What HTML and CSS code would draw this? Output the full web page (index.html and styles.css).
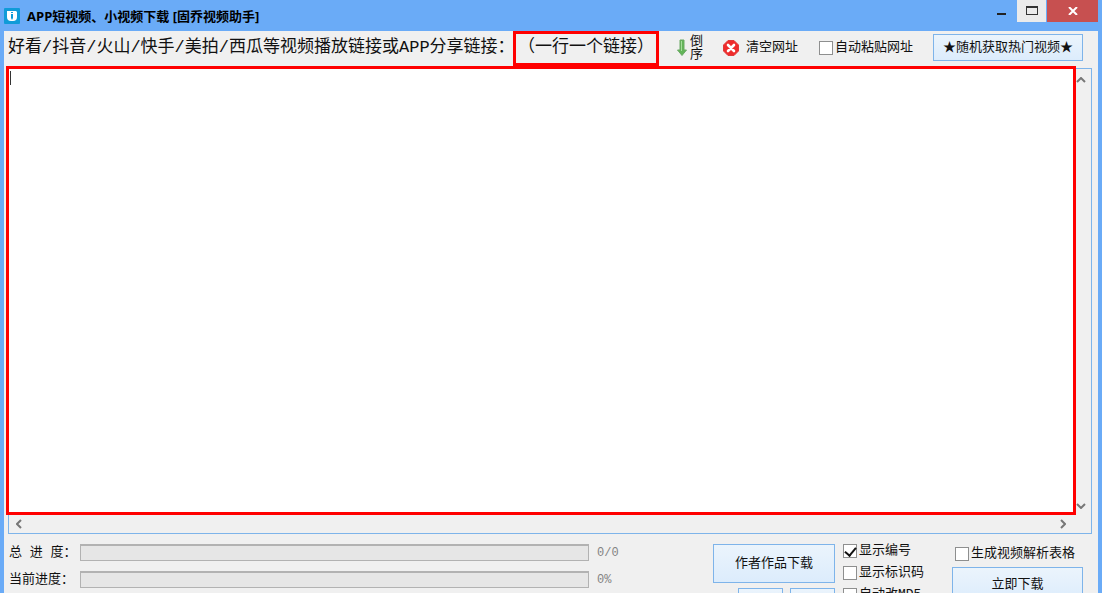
FILE: index.html
```html
<!DOCTYPE html>
<html lang="zh-CN">
<head>
    <meta charset="UTF-8">
    <meta name="viewport" content="width=device-width, initial-scale=1.0">
    <title>APP短视频、小视频下载 [固乔视频助手]</title>
    <link rel="stylesheet" href="styles.css">
</head>
<body>
    <div class="window">
        <!-- Title bar -->
        <header class="titlebar">
            <svg class="logo" viewBox="0 0 16 16">
                <rect width="16" height="16" rx="1" fill="#0f9bd8"/>
                <path d="M3 3h9l1 1v5a4 4 0 0 1-4 4H7a4 4 0 0 1-4-4z" fill="#fff"/>
                <rect x="7" y="4" width="2" height="1" fill="#0f9bd8"/>
                <path d="M7 6h2v4l-1 2-1-2z" fill="#0f9bd8"/>
            </svg>
            <h1 class="title">APP短视频、小视频下载 [固乔视频助手]</h1>
            <div class="window-buttons">
                <button class="win-button minimize" aria-label="最小化">
                    <svg width="10" height="22" viewBox="0 0 10 22"><path d="M0 13h9v2H0z" fill="#222"/></svg>
                </button>
                <button class="win-button maximize" aria-label="最大化">
                    <svg width="12" height="10" viewBox="0 0 12 10"><path d="M0 0h12v9H0zM1 2v6h10V2z" fill="#333" fill-rule="evenodd"/></svg>
                </button>
                <button class="win-button close" aria-label="关闭">
                    <svg width="10" height="8" viewBox="0 0 10 8"><path d="M1 0l8 8M9 0L1 8" stroke="#fff" stroke-width="2"/></svg>
                </button>
            </div>
        </header>

        <main class="content">
            <!-- Toolbar -->
            <div class="toolbar">
                <label class="prompt" for="links">好看/抖音/火山/快手/美拍/西瓜等视频播放链接或APP分享链接：</label>
                <span class="hint">（一行一个链接）</span>
                <button class="tool reverse">
                    <svg width="10" height="17" viewBox="0 0 10 17"><path d="M3 1h4v10h2.5L5 16.500.5 11H3z" fill="#62b558" stroke="#6aa964"/><path d="M4.500 2v10" stroke="#a5dc9b"/></svg>
                    <span>倒<br>序</span>
                </button>
                <button class="tool clear">
                    <svg width="16" height="16" viewBox="0 0 16 16"><path d="M5 .5h6L15.500 5v6L11 15.500H5L.5 11V5z" fill="#ee2c2c" stroke="#e03a3a"/><path d="M5 5l6 6M11 5l-6 6" stroke="#fff" stroke-width="2.600" stroke-linecap="round"/></svg>
                    <span>清空网址</span>
                </button>
                <label class="check"><input type="checkbox">自动粘贴网址</label>
                <button class="button random">★随机获取热门视频★</button>
            </div>

            <!-- Link editor -->
            <div class="editor">
                <textarea id="links" class="links" wrap="off"></textarea>
                <div class="scroll-y">
                    <svg width="10" height="6" viewBox="0 0 10 6"><path d="M1 5l4-4 4 4" /></svg>
                    <svg width="10" height="6" viewBox="0 0 10 6"><path d="M1 1l4 4 4-4" /></svg>
                </div>
                <div class="scroll-x">
                    <svg width="6" height="10" viewBox="0 0 6 10"><path d="M5 1L1 5l4 4" /></svg>
                    <svg width="6" height="10" viewBox="0 0 6 10"><path d="M1 1l4 4-4 4" /></svg>
                </div>
                <div class="highlight"></div>
                <div class="caret"></div>
            </div>

            <!-- Progress and options -->
            <div class="footer">
                <div class="progress-list">
                    <span class="progress-label">总&nbsp;进&nbsp;度：</span>
                    <div class="progress" role="progressbar" aria-label="总进度" aria-valuenow="0"></div>
                    <span class="progress-value">0/0</span>
                    <span class="progress-label">当前进度：</span>
                    <div class="progress" role="progressbar" aria-label="当前进度" aria-valuenow="0"></div>
                    <span class="progress-value">0%</span>
                </div>
                <div class="works">
                    <button class="button works-button">作者作品下载</button>
                    <div class="small-buttons">
                        <button class="button" aria-label="上一个"></button>
                        <button class="button" aria-label="下一个"></button>
                    </div>
                </div>
                <div class="options">
                    <label class="check"><input type="checkbox" checked>显示编号</label>
                    <label class="check"><input type="checkbox">显示标识码</label>
                    <label class="check"><input type="checkbox">自动改MD5</label>
                </div>
                <div class="download">
                    <label class="check"><input type="checkbox">生成视频解析表格</label>
                    <button class="button download-button">立即下载</button>
                </div>
            </div>
        </main>
    </div>
</body>
</html>
```
FILE: styles.css
```css
/* General Styles */
* {
    box-sizing: border-box;
}

body {
    margin: 0;
    font-family: "Liberation Mono", "Noto Sans CJK SC", monospace;
    font-size: 13px;
    line-height: 16px;
    color: #111;
}

button {
    font: inherit;
    color: inherit;
    padding: 0;
    border: none;
    background: none;
    white-space: nowrap;
}

svg {
    display: block;
    flex: none;
}

/* Window */
.window {
    display: flex;
    flex-direction: column;
    height: 100vh;
    padding: 0 4px;
    background: #6aabf7;
    overflow: hidden;
}

.titlebar {
    display: flex;
    align-items: center;
    height: 31px;
    flex: none;
}

.logo {
    width: 16px;
    height: 16px;
}

.title {
    margin: 0 0 0 7px;
    font-family: "Open Sans", "Noto Sans CJK SC", sans-serif;
    font-size: 13px;
    font-weight: 700;
    color: #000;
}

.window-buttons {
    display: flex;
    align-self: flex-start;
    margin-left: auto;
}

.win-button {
    display: flex;
    align-items: center;
    justify-content: center;
    height: 22px;
}

.minimize {
    width: 30px;
}

.maximize {
    width: 29px;
    background: #ebebeb;
}

.close {
    width: 51px;
    margin-left: 1px;
    background: #c75050;
}

.content {
    display: flex;
    flex-direction: column;
    flex: 1;
    min-height: 0;
    background: #f0f0f0;
}

/* Toolbar */
.toolbar {
    display: flex;
    align-items: center;
    height: 35px;
    padding: 0 15px 2px 4px;
    flex: none;
    white-space: nowrap;
}

.prompt,
.hint {
    font-size: 17px;
}

.prompt {
    width: 505px;
}

.hint {
    align-self: flex-start;
    height: 35px;
    padding: 0 2px;
    line-height: 28px;
    border: 3px solid #f00;
}

.tool {
    display: flex;
    align-items: center;
}

.reverse {
    margin-left: 18px;
    gap: 3px;
    line-height: 13px;
}

.clear {
    margin-left: 20px;
    gap: 7px;
}

.toolbar .check {
    margin-left: 21px;
}

.button {
    background: linear-gradient(#ebf4fc, #dcecfc);
    border: 1px solid #7eb4ea;
}

.random {
    width: 150px;
    height: 27px;
    margin-left: auto;
}

/* Check boxes */
.check {
    display: flex;
    align-items: center;
    gap: 2px;
    height: 14px;
    white-space: nowrap;
}

.check input {
    appearance: none;
    width: 14px;
    height: 14px;
    margin: 0;
    flex: none;
    background: #fff;
    border: 1px solid #8e8f8f;
}

.check input:checked::before {
    content: "";
    display: block;
    width: 5px;
    height: 9px;
    margin: 0 auto;
    border: solid #111;
    border-width: 0 2px 2px 0;
    transform: rotate(40deg);
}

/* Link editor */
.editor {
    position: relative;
    display: grid;
    grid-template-columns: 1fr 18px;
    grid-template-rows: 1fr 19px;
    flex: 1;
    min-height: 0;
    margin: 2px 6px 0 4px;
    border: 1px solid #7eb4ea;
}

.links {
    width: 100%;
    height: 100%;
    padding: 2px;
    border: none;
    outline: none;
    resize: none;
    overflow: hidden;
    background: #fff;
    font: inherit;
}

.scroll-y,
.scroll-x {
    display: flex;
    align-items: center;
    justify-content: space-between;
}

.scroll-y {
    flex-direction: column;
    padding: 8px 3px 5px 0;
}

.scroll-x {
    padding: 0 7px;
}

.scroll-y path,
.scroll-x path {
    fill: none;
    stroke: #777;
    stroke-width: 2;
}

/* Red frame over the text box */
.highlight {
    position: absolute;
    top: -3px;
    right: 15px;
    bottom: 18px;
    left: -3px;
    border: 3px solid #f00;
    pointer-events: none;
}

.caret {
    position: absolute;
    top: 2px;
    left: 1px;
    width: 1px;
    height: 14px;
    background: #333;
}

/* Footer */
.footer {
    display: flex;
    align-items: flex-start;
    height: 59px;
    padding: 10px 15px 0 5px;
    flex: none;
    overflow: hidden;
}

.progress-list {
    display: grid;
    grid-template-columns: 71px 1fr 124px;
    row-gap: 10px;
    flex: 1;
    line-height: 18px;
}

.progress-label {
    height: 17px;
    white-space: nowrap;
}

.progress {
    height: 17px;
    background: #e6e6e6;
    border: 1px solid #b2b2b2;
    border-top-width: 2px;
}

.progress-value {
    height: 17px;
    padding-left: 8px;
    font-size: 12px;
    color: #838383;
}

.works {
    width: 122px;
}

.works-button {
    width: 100%;
    height: 39px;
}

.small-buttons {
    display: flex;
    justify-content: flex-end;
    gap: 7px;
    margin-top: 5px;
}

.small-buttons .button {
    width: 45px;
    height: 27px;
}

.options {
    display: flex;
    flex-direction: column;
    gap: 8px;
    width: 109px;
    margin-left: 8px;
}

.download {
    width: 131px;
}

.download .check {
    margin: 3px 0 6px 3px;
}

.download-button {
    width: 100%;
    height: 35px;
}
```
